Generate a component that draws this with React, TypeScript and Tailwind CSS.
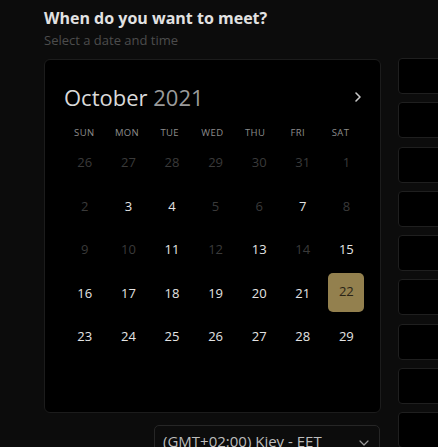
import React from "react";

const headers = ["SUN", "MON", "TUE", "WED", "THU", "FRI", "SAT"];

type Day = { n: number; s: "off" | "on" | "sel" };
const rows: Day[][] = [
  [26, 27, 28, 29, 30, 31, 1].map((n) => ({ n, s: "off" as const })),
  [
    { n: 2, s: "off" },
    { n: 3, s: "on" },
    { n: 4, s: "on" },
    { n: 5, s: "off" },
    { n: 6, s: "off" },
    { n: 7, s: "on" },
    { n: 8, s: "off" },
  ],
  [
    { n: 9, s: "off" },
    { n: 10, s: "off" },
    { n: 11, s: "on" },
    { n: 12, s: "off" },
    { n: 13, s: "on" },
    { n: 14, s: "off" },
    { n: 15, s: "on" },
  ],
  [
    { n: 16, s: "on" },
    { n: 17, s: "on" },
    { n: 18, s: "on" },
    { n: 19, s: "on" },
    { n: 20, s: "on" },
    { n: 21, s: "on" },
    { n: 22, s: "sel" },
  ],
  [23, 24, 25, 26, 27, 28, 29].map((n) => ({ n, s: "on" as const })),
];

export default function App() {
  return (
    <div
      className="w-[438px] h-[447px] overflow-hidden bg-[#0c0c0c] pl-[44px] pt-[6px]"
      style={{ fontFamily: '"Open Sans", "Noto Sans", sans-serif' }}
    >
      <div className="text-[16px] leading-[24px] font-bold text-[#e2e2e2]">
        When do you want to meet?
      </div>
      <div className="text-[13px] leading-[18px] text-[#4c4c4c] mt-[1px]">
        Select a date and time
      </div>
      <div className="flex mt-[10px] gap-[17px]">
        <div className="w-[337px] shrink-0 flex flex-col">
          <div className="h-[354px] bg-black border border-[#1c1c1c] rounded-[6px]">
            <div className="flex items-center pl-[19px] pr-[18px] pt-[22px] h-[52px]">
              <div className="text-[22px] leading-[30px] text-[#dadada] flex-1">
                October <span className="text-[#9a9a9a]">2021</span>
              </div>
              <svg width="8" height="12" viewBox="0 0 8 12">
                <polyline
                  points="2,2 6,6 2,10"
                  fill="none"
                  stroke="#c8c8c8"
                  strokeWidth="1.6"
                  strokeLinecap="round"
                  strokeLinejoin="round"
                />
              </svg>
            </div>
            <div className="grid grid-cols-[repeat(7,42.7px)] pl-[18px] mt-[15px] h-[12px]">
              {headers.map((h) => (
                <div
                  key={h}
                  className="text-center text-[9.5px] leading-[12px] tracking-[0.4px] text-[#8c8c8c]"
                >
                  {h}
                </div>
              ))}
            </div>
            <div className="pl-[18px] mt-[2px]">
              {rows.map((r, i) => (
                <div key={i} className="grid grid-cols-[repeat(7,43.6px)] h-[43.6px]">
                  {r.map((d, j) => (
                    <div key={j} className="flex items-center justify-center">
                      {d.s === "sel" ? (
                        <div className="w-[36px] h-[39px] rounded-[5px] bg-[#93804e] flex items-center justify-center text-[13px] text-[#2a2416] -mt-[3px]">
                          {d.n}
                        </div>
                      ) : (
                        <span
                          className={
                            "text-[13px] " +
                            (d.s === "on" ? "text-[#e4e4e4]" : "text-[#3a3a3a]")
                          }
                        >
                          {d.n}
                        </span>
                      )}
                    </div>
                  ))}
                </div>
              ))}
            </div>
          </div>
          <div className="ml-[110px] mt-[12px] w-[226px] h-[40px] border border-[#262626] rounded-[5px] flex items-start pl-[8px] pr-[10px] pt-[4px]">
            <span className="flex-1 text-[15px] leading-[22px] text-[#bdbdbd]">(GMT+02:00) Kiev - EET</span>
            <svg width="10" height="6" viewBox="0 0 10 6" className="mt-[10px]">
              <polyline
                points="1,1 5,5 9,1"
                fill="none"
                stroke="#9a9a9a"
                strokeWidth="1.2"
                strokeLinecap="round"
                strokeLinejoin="round"
              />
            </svg>
          </div>
        </div>
        <div className="flex flex-col gap-[8.3px] w-[60px] shrink-0 -mt-[1px]">
          {Array.from({ length: 9 }).map((_, i) => (
            <div
              key={i}
              className="h-[36px] shrink-0 bg-black border border-[#1f1f1f] rounded-[4px]"
            />
          ))}
        </div>
      </div>
    </div>
  );
}
